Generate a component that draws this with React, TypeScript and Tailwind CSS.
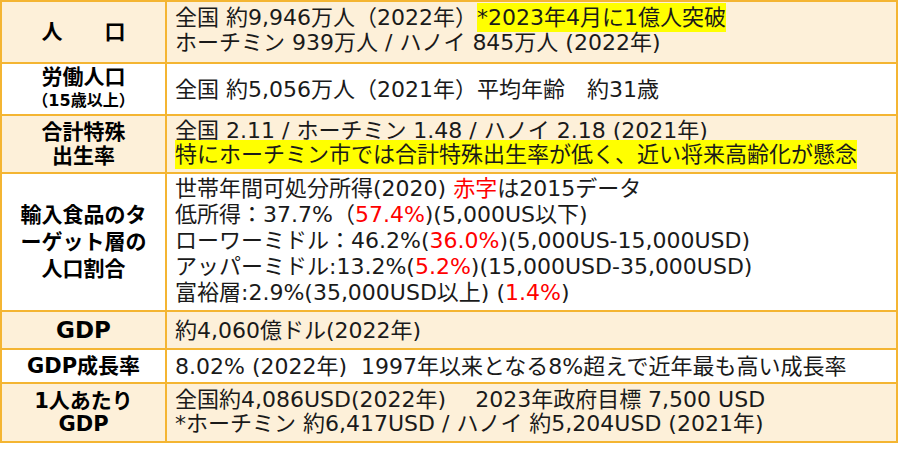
import type { ReactNode } from 'react';

type Row = {
  label: ReactNode;
  content: ReactNode;
  cream: boolean;
  height: string;
};

const Mark = ({ children }: { children: ReactNode }) => (
  <span className="bg-[#ffff00] py-[2px]">{children}</span>
);

const Red = ({ children }: { children: ReactNode }) => (
  <span className="text-[#ff0000]">{children}</span>
);

const rows: Row[] = [
  {
    cream: true,
    height: 'h-[60px]',
    label: <div>人　　口</div>,
    content: (
      <div className="pb-[5px]">
        <div>
          全国 約9,946万人（2022年）<Mark>*2023年4月に1億人突破</Mark>
        </div>
        <div>ホーチミン 939万人 / ハノイ 845万人 (2022年)</div>
      </div>
    ),
  },
  {
    cream: false,
    height: 'h-[52px]',
    label: (
      <div className="leading-[23px]">
        <div>労働人口</div>
        <div className="text-[16px]">（15歳以上）</div>
      </div>
    ),
    content: <div>全国 約5,056万人（2021年）平均年齢　約31歳</div>,
  },
  {
    cream: true,
    height: 'h-[58px]',
    label: (
      <div className="leading-[24px]">
        <div>合計特殊</div>
        <div>出生率</div>
      </div>
    ),
    content: (
      <div className="pb-[2px] leading-[24px]">
        <div>全国 2.11 / ホーチミン 1.48 / ハノイ 2.18 (2021年)</div>
        <div>
          <Mark>特にホーチミン市では合計特殊出生率が低く、近い将来高齢化が懸念</Mark>
        </div>
      </div>
    ),
  },
  {
    cream: false,
    height: 'h-[138px]',
    label: (
      <div className="leading-[27px]">
        <div>輸入食品のタ</div>
        <div>ーゲット層の</div>
        <div>人口割合</div>
      </div>
    ),
    content: (
      <div className="pb-[3px] leading-[26px]">
        <div>
          世帯年間可処分所得(2020) <Red>赤字</Red>は2015データ
        </div>
        <div>
          低所得：37.7%（<Red>57.4%</Red>)(5,000US以下)
        </div>
        <div>
          ローワーミドル：46.2%(<Red>36.0%</Red>)(5,000US-15,000USD)
        </div>
        <div>
          アッパーミドル:13.2%(<Red>5.2%</Red>)(15,000USD-35,000USD)
        </div>
        <div>
          富裕層:2.9%(35,000USD以上) (<Red>1.4%</Red>)
        </div>
      </div>
    ),
  },
  {
    cream: true,
    height: 'h-[38px]',
    label: <div className="text-[23px]">GDP</div>,
    content: <div>約4,060億ドル(2022年)</div>,
  },
  {
    cream: false,
    height: 'h-[34px]',
    label: <div>GDP成長率</div>,
    content: <div>8.02% (2022年)&nbsp; 1997年以来となる8%超えで近年最も高い成長率</div>,
  },
  {
    cream: true,
    height: 'h-[59px]',
    label: (
      <div className="leading-[23px]">
        <div>1人あたり</div>
        <div>GDP</div>
      </div>
    ),
    content: (
      <div className="pb-[2px] leading-[24px]">
        <div>全国約4,086USD(2022年)　 2023年政府目標 7,500 USD</div>
        <div>*ホーチミン 約6,417USD / ハノイ 約5,204USD (2021年)</div>
      </div>
    ),
  },
];

export default function App() {
  return (
    <div className="h-[456px] w-[902px] overflow-hidden bg-white font-['DejaVu_Sans','Noto_Sans_CJK_JP',sans-serif]">
      <div className="w-[898px] border-2 border-[#f4b532]">
        {rows.map((row, i) => (
          <div
            key={i}
            className={`flex ${row.height} ${i > 0 ? 'border-t-2' : ''} border-[#f4b532] ${
              row.cream ? 'bg-[#fdf0d9]' : 'bg-white'
            }`}
          >
            <div className="flex w-[165px] shrink-0 items-center justify-center border-r-2 border-[#f4b532] text-center text-[21px] leading-[25px] font-bold text-black">
              {row.label}
            </div>
            <div className="flex flex-1 items-center pl-2 text-[22px] leading-[25px] whitespace-nowrap text-[#1a1a1a]">
              {row.content}
            </div>
          </div>
        ))}
      </div>
    </div>
  );
}
